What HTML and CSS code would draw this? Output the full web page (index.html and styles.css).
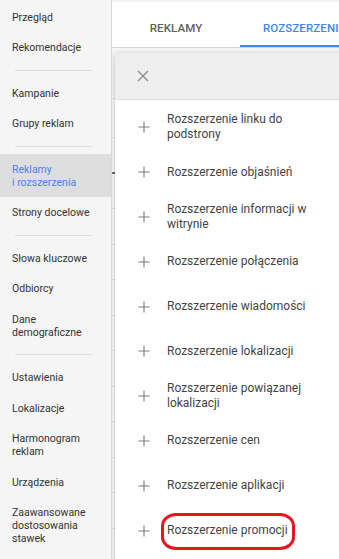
FILE: index.html
```html
<!DOCTYPE html>
<html lang="pl">
<head>
<meta charset="utf-8">
<title>Rozszerzenia</title>
<link rel="stylesheet" href="styles.css">
</head>
<body>
<div class="app">
  <nav class="sidebar">
    <a class="nav-item">Przegląd</a>
    <a class="nav-item">Rekomendacje</a>
    <div class="nav-divider"></div>
    <a class="nav-item">Kampanie</a>
    <a class="nav-item">Grupy reklam</a>
    <div class="nav-divider"></div>
    <a class="nav-item active">Reklamy<br>i rozszerzenia</a>
    <a class="nav-item">Strony docelowe</a>
    <div class="nav-divider"></div>
    <a class="nav-item">Słowa kluczowe</a>
    <a class="nav-item">Odbiorcy</a>
    <a class="nav-item">Dane<br>demograficzne</a>
    <div class="nav-divider"></div>
    <a class="nav-item">Ustawienia</a>
    <a class="nav-item">Lokalizacje</a>
    <a class="nav-item">Harmonogram<br>reklam</a>
    <a class="nav-item">Urządzenia</a>
    <a class="nav-item">Zaawansowane<br>dostosowania<br>stawek</a>
  </nav>
  <main class="main">
    <div class="tabs">
      <div class="tab">REKLAMY</div>
      <div class="tab active">ROZSZERZENIA</div>
    </div>
    <div class="bg-table">
      <div class="bg-head"></div>
      <div class="bg-row first"></div>
      <div class="bg-row marked"></div>
      <div class="bg-row"></div>
      <div class="bg-row"></div>
      <div class="bg-row"></div>
      <div class="bg-row"></div>
      <div class="bg-row"></div>
      <div class="bg-row"></div>
      <div class="bg-row"></div>
      <div class="bg-row"></div>
      <div class="bg-row"></div>
      <div class="bg-row"></div>
    </div>
    <div class="menu-card">
      <div class="menu-header">
        <svg class="close-icon" width="12" height="12" viewBox="0 0 12 12"><path d="M1 1L11 11M11 1L1 11" stroke="#8a8a8a" stroke-width="1.3" fill="none"/></svg>
      </div>
      <ul class="menu-list">
        <li class="menu-item"><svg class="plus" width="12" height="12" viewBox="0 0 12 12"><path d="M6 0.5V11.5M0.5 6H11.5" stroke="#7a7a7a" stroke-width="1.1" fill="none"/></svg><span class="label">Rozszerzenie linku do podstrony</span></li>
        <li class="menu-item"><svg class="plus" width="12" height="12" viewBox="0 0 12 12"><path d="M6 0.5V11.5M0.5 6H11.5" stroke="#7a7a7a" stroke-width="1.1" fill="none"/></svg><span class="label">Rozszerzenie objaśnień</span></li>
        <li class="menu-item"><svg class="plus" width="12" height="12" viewBox="0 0 12 12"><path d="M6 0.5V11.5M0.5 6H11.5" stroke="#7a7a7a" stroke-width="1.1" fill="none"/></svg><span class="label">Rozszerzenie informacji w witrynie</span></li>
        <li class="menu-item"><svg class="plus" width="12" height="12" viewBox="0 0 12 12"><path d="M6 0.5V11.5M0.5 6H11.5" stroke="#7a7a7a" stroke-width="1.1" fill="none"/></svg><span class="label">Rozszerzenie połączenia</span></li>
        <li class="menu-item"><svg class="plus" width="12" height="12" viewBox="0 0 12 12"><path d="M6 0.5V11.5M0.5 6H11.5" stroke="#7a7a7a" stroke-width="1.1" fill="none"/></svg><span class="label">Rozszerzenie wiadomości</span></li>
        <li class="menu-item"><svg class="plus" width="12" height="12" viewBox="0 0 12 12"><path d="M6 0.5V11.5M0.5 6H11.5" stroke="#7a7a7a" stroke-width="1.1" fill="none"/></svg><span class="label">Rozszerzenie lokalizacji</span></li>
        <li class="menu-item"><svg class="plus" width="12" height="12" viewBox="0 0 12 12"><path d="M6 0.5V11.5M0.5 6H11.5" stroke="#7a7a7a" stroke-width="1.1" fill="none"/></svg><span class="label">Rozszerzenie powiązanej lokalizacji</span></li>
        <li class="menu-item"><svg class="plus" width="12" height="12" viewBox="0 0 12 12"><path d="M6 0.5V11.5M0.5 6H11.5" stroke="#7a7a7a" stroke-width="1.1" fill="none"/></svg><span class="label">Rozszerzenie cen</span></li>
        <li class="menu-item"><svg class="plus" width="12" height="12" viewBox="0 0 12 12"><path d="M6 0.5V11.5M0.5 6H11.5" stroke="#7a7a7a" stroke-width="1.1" fill="none"/></svg><span class="label">Rozszerzenie aplikacji</span></li>
        <li class="menu-item"><svg class="plus" width="12" height="12" viewBox="0 0 12 12"><path d="M6 0.5V11.5M0.5 6H11.5" stroke="#7a7a7a" stroke-width="1.1" fill="none"/></svg><span class="label highlighted">Rozszerzenie promocji<span class="ring"></span></span></li>
      </ul>
    </div>
  </main>
</div>
</body>
</html>
```

FILE: styles.css
```css
* { box-sizing: border-box; }
html, body { margin: 0; padding: 0; }
body {
  width: 339px;
  height: 559px;
  overflow: hidden;
  font-family: Roboto, "Liberation Sans", sans-serif;
  background: #fff;
}
.app {
  display: flex;
  height: 559px;
}
.sidebar {
  width: 112px;
  flex: none;
  background: #f5f5f5;
  border-right: 1px solid #d9d9d9;
  padding-top: 1.75px;
  display: flex;
  flex-direction: column;
}
.nav-item {
  display: block;
  padding: 8.75px 4px 8.75px 12px;
  font-size: 10.5px;
  line-height: 13px;
  color: #333;
}
.nav-item.active {
  background: #dedede;
  color: #4a80f2;
}
.nav-divider {
  height: 15px;
  padding: 7px 0;
  margin: 0 19px 0 15px;
}
.nav-divider::before {
  content: "";
  display: block;
  height: 1px;
  background: #dcdcdc;
}
.main {
  flex: 1;
  position: relative;
  background: #f6f6f6;
  overflow: hidden;
}
.tabs {
  height: 48px;
  display: flex;
  background: #fff;
  border-bottom: 1px solid #d6d6d6;
  background-image: linear-gradient(to bottom, rgba(0,0,0,0.07), rgba(0,0,0,0) 3px);
}
.tab {
  flex: none;
  width: 128px;
  padding-top: 20px;
  text-align: center;
  font-size: 11.5px;
  line-height: 16px;
  font-weight: 500;
  color: #616161;
  letter-spacing: 0.1px;
}
.tab.active {
  width: auto;
  padding-left: 23px;
  padding-right: 23px;
  text-align: left;
  color: #4285f4;
  border-bottom: 2px solid #4285f4;
  height: 47px;
}
.bg-table {
  display: flex;
  flex-direction: column;
}
.bg-head {
  height: 51px;
  border-bottom: 1px solid #e0e0e0;
}
.bg-row {
  height: 35.5px;
  border-bottom: 1px solid #e0e0e0;
  background: #fafafa;
}
.bg-row.first { height: 39px; }
.bg-row.marked { border-bottom: 2px solid #6d6d6d; }
.menu-card {
  position: absolute;
  left: 3px;
  top: 53px;
  right: -30px;
  bottom: -30px;
  background: #fff;
  border-radius: 3px 0 0 0;
  box-shadow: 0 1px 5px rgba(0,0,0,0.28);
}
.menu-header {
  height: 47px;
  background: #eeeeee;
  border-bottom: 1px solid #e0e0e0;
  border-radius: 3px 0 0 0;
  display: flex;
  align-items: center;
  padding-left: 22px;
}
.close-icon { display: block; }
.menu-list {
  list-style: none;
  margin: 0;
  padding: 5px 0 0 0;
}
.menu-item {
  min-height: 44.8px;
  display: flex;
  align-items: center;
  padding-left: 22.5px;
}
.plus {
  flex: none;
  display: block;
  margin-right: 17.5px;
}
.label {
  max-width: 160px;
  font-size: 12px;
  line-height: 15px;
  color: #444;
}
.highlighted { position: relative; }
.ring {
  position: absolute;
  left: -6.5px;
  top: -10.5px;
  width: 134px;
  height: 37px;
  border: 3.5px solid #e8141e;
  border-radius: 15px / 13px;
}
```
